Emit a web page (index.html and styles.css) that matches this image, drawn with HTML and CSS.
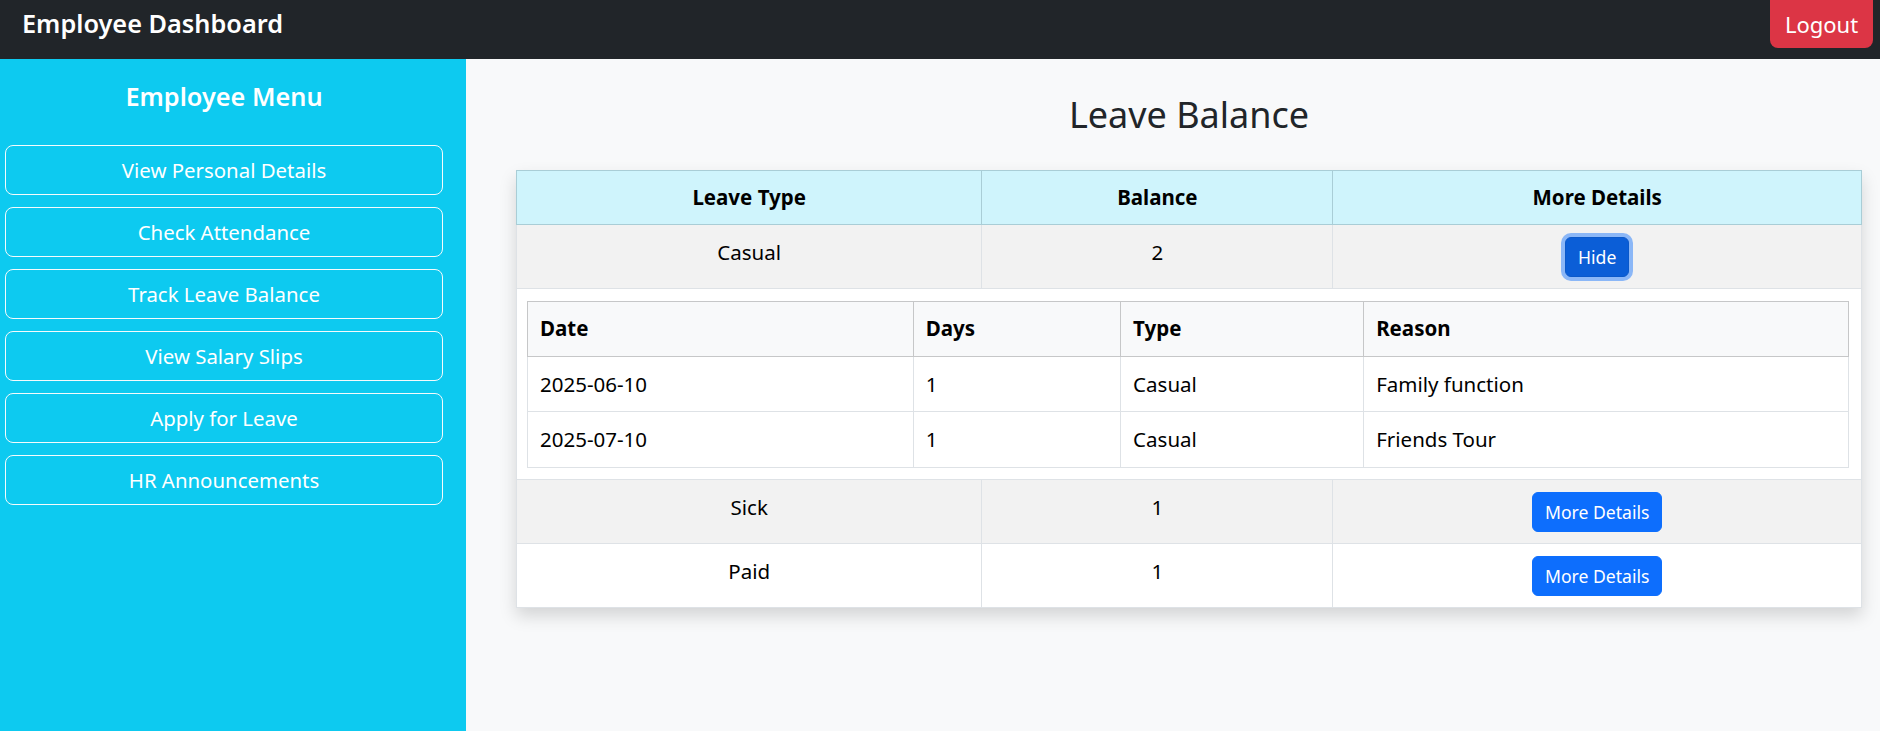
FILE: index.html
```html
<!DOCTYPE html>
<html lang="en">
<head>
<meta charset="utf-8">
<title>Employee Dashboard</title>
<link rel="stylesheet" href="styles.css">
</head>
<body>
<header class="topbar">
  <span class="brand">Employee Dashboard</span>
  <button class="btn-logout">Logout</button>
</header>
<div class="layout">
  <aside class="sidebar">
    <h4 class="menu-title">Employee Menu</h4>
    <nav class="menu">
      <button class="menu-btn">View Personal Details</button>
      <button class="menu-btn">Check Attendance</button>
      <button class="menu-btn">Track Leave Balance</button>
      <button class="menu-btn">View Salary Slips</button>
      <button class="menu-btn">Apply for Leave</button>
      <button class="menu-btn">HR Announcements</button>
    </nav>
  </aside>
  <main class="content">
    <h2 class="page-title">Leave Balance</h2>
    <table class="leave-table">
      <colgroup>
        <col class="c-type"><col class="c-bal"><col class="c-more">
      </colgroup>
      <thead>
        <tr><th>Leave Type</th><th>Balance</th><th>More Details</th></tr>
      </thead>
      <tbody>
        <tr class="striped">
          <td>Casual</td><td>2</td>
          <td><button class="btn-primary btn-active">Hide</button></td>
        </tr>
        <tr class="detail-row">
          <td colspan="3" class="detail-cell">
            <table class="detail-table">
              <colgroup>
                <col class="d-date"><col class="d-days"><col class="d-type"><col class="d-reason">
              </colgroup>
              <thead>
                <tr><th>Date</th><th>Days</th><th>Type</th><th>Reason</th></tr>
              </thead>
              <tbody>
                <tr><td>2025-06-10</td><td>1</td><td>Casual</td><td>Family function</td></tr>
                <tr><td>2025-07-10</td><td>1</td><td>Casual</td><td>Friends Tour</td></tr>
              </tbody>
            </table>
          </td>
        </tr>
        <tr class="striped">
          <td>Sick</td><td>1</td>
          <td><button class="btn-primary">More Details</button></td>
        </tr>
        <tr>
          <td>Paid</td><td>1</td>
          <td><button class="btn-primary">More Details</button></td>
        </tr>
      </tbody>
    </table>
  </main>
</div>
</body>
</html>
```
FILE: styles.css
```css
* { box-sizing: border-box; }
html, body { margin: 0; padding: 0; }
body {
  font-family: "Noto Sans", "Open Sans", sans-serif;
  background: #f8f9fa;
  color: #212529;
  height: 731px;
  overflow: hidden;
}
button { font-family: inherit; cursor: pointer; }

.topbar {
  height: 59px;
  background: #212529;
  display: flex;
  justify-content: space-between;
  align-items: flex-start;
  padding: 0 7px 0 22px;
}
.brand {
  color: #fff;
  font-size: 25.3px;
  font-weight: 600;
  line-height: 46px;
}
.btn-logout {
  background: #dc3545;
  color: #fff;
  border: 0;
  border-radius: 0 0 8px 8px;
  width: 103px;
  height: 48px;
  font-size: 22px;
  padding: 0;
}

.layout {
  display: flex;
  height: 672px;
}
.sidebar {
  width: 466px;
  flex: none;
  background: #0dcaf0;
  padding: 22px 23px 0 5px;
}
.menu-title {
  margin: 0 0 34px;
  text-align: center;
  color: #fff;
  font-size: 25.3px;
  font-weight: 600;
  line-height: 1.2;
}
.menu {
  display: flex;
  flex-direction: column;
  gap: 12px;
}
.menu-btn {
  height: 50px;
  background: transparent;
  border: 1px solid #f4fbfd;
  border-radius: 8px;
  color: #fff;
  font-size: 20.4px;
  padding: 0;
}

.content {
  flex: 1;
  padding: 34px 18px 0 50px;
}
.page-title {
  margin: 0 0 34px;
  text-align: center;
  font-size: 36px;
  font-weight: 400;
  line-height: 1.2;
  color: #212529;
}

.leave-table {
  width: 100%;
  border-collapse: collapse;
  background: #fff;
  box-shadow: 0 8px 16px rgba(0, 0, 0, 0.15);
  color: #000;
  font-size: 20.5px;
  line-height: 31.5px;
}
.c-type { width: 34.6%; }
.c-bal { width: 26.1%; }
.c-more { width: 39.3%; }

.leave-table > thead > tr > th {
  background: #cff4fc;
  border: 1px solid #a9cdd6;
  font-weight: 700;
  line-height: 30px;
  padding: 11px 12px 12px;
  text-align: center;
}
.leave-table > tbody > tr > td {
  border: 1px solid #dee2e6;
  padding: 12px 12px 11px;
  text-align: center;
  vertical-align: top;
}
.leave-table > tbody > tr.striped > td { background: #f2f2f2; }

.btn-primary {
  background: #0d6efd;
  border: 1px solid #0d6efd;
  color: #fff;
  border-radius: 6px;
  font-size: 17.6px;
  line-height: 26px;
  padding: 6px 12px;
}
.btn-active {
  background: #0b5ed7;
  border-color: #0a58ca;
  box-shadow: 0 0 0 4px rgba(13, 110, 253, 0.45);
}

.leave-table > tbody > tr > td.detail-cell {
  padding: 12px 12px 11px 10px;
  background: #fff;
  text-align: left;
}
.detail-table {
  width: 100%;
  border-collapse: collapse;
  font-size: 20.5px;
  line-height: 31.5px;
  color: #000;
}
.d-date { width: 29.2%; }
.d-days { width: 15.7%; }
.d-type { width: 18.4%; }
.d-reason { width: 36.7%; }
.detail-table th {
  background: #f8f9fa;
  border: 1px solid #c6c7c8;
  text-align: left;
  font-weight: 700;
  padding: 11px 12px;
}
.detail-table td {
  border: 1px solid #dee2e6;
  padding: 12px 12px 11px;
  text-align: left;
  vertical-align: top;
}
```
